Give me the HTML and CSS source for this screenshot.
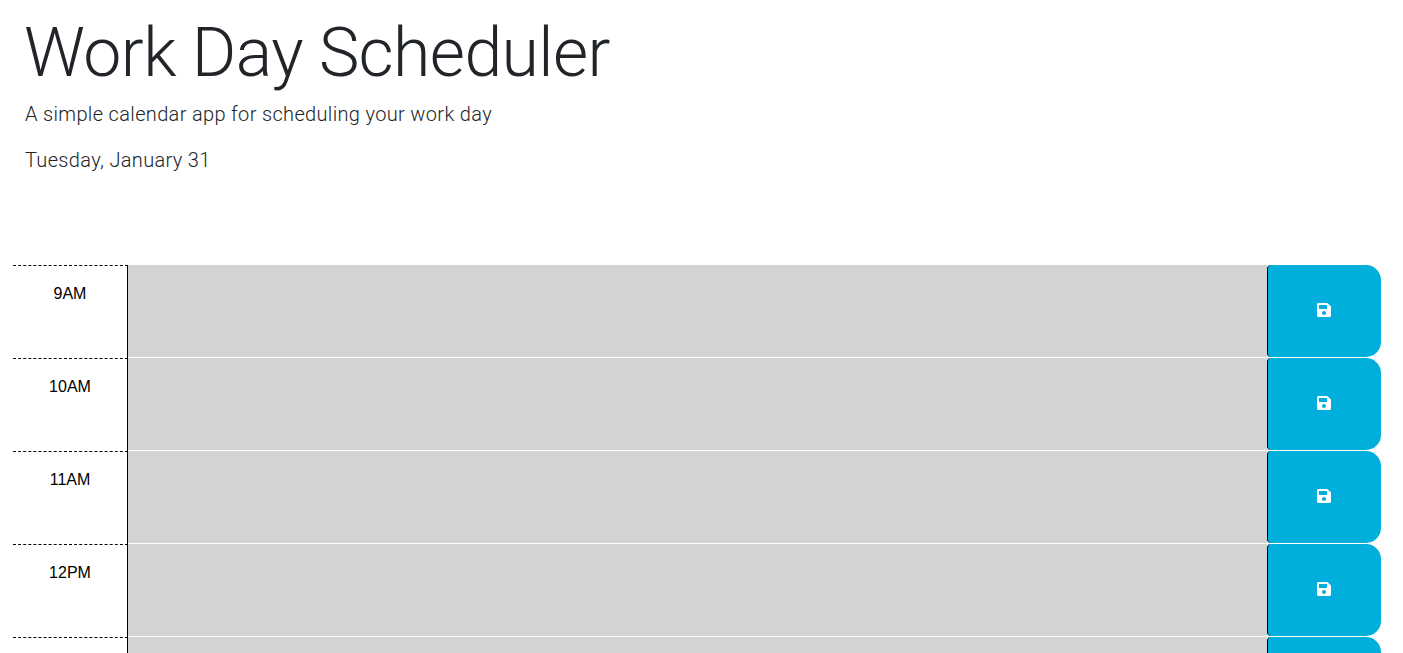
FILE: index.html
```html
<!DOCTYPE html>
<html lang="en">
<head>
  <meta charset="UTF-8">
  <title>Work Day Scheduler</title>
  <link rel="stylesheet" href="styles.css">
</head>
<body>

<header class="jumbotron">
  <h1 class="display">Work Day Scheduler</h1>
  <p class="lead">A simple calendar app for scheduling your work day</p>
  <p class="lead" id="currentDay">Tuesday, January 31</p>
</header>

<div class="container">
  <div class="row">
    <div class="hour">9AM</div>
    <textarea class="description"></textarea>
    <button class="saveBtn"><svg class="save-icon" viewBox="0 0 448 512"><path d="M433.9 129.9l-83.9-83.9A48 48 0 0 0 316.1 32H48C21.5 32 0 53.5 0 80v352c0 26.5 21.5 48 48 48h352c26.5 0 48-21.5 48-48V163.9a48 48 0 0 0-14.1-34zM224 416c-35.3 0-64-28.7-64-64 0-35.3 28.7-64 64-64s64 28.7 64 64c0 35.3-28.7 64-64 64zm96-304.5V212c0 6.6-5.4 12-12 12H76c-6.6 0-12-5.4-12-12V108c0-6.6 5.4-12 12-12h228.5c3.2 0 6.2 1.3 8.5 3.5l3.5 3.5c2.3 2.3 3.5 5.3 3.5 8.5z"/></svg></button>
  </div>
  <div class="row">
    <div class="hour">10AM</div>
    <textarea class="description"></textarea>
    <button class="saveBtn"><svg class="save-icon" viewBox="0 0 448 512"><path d="M433.9 129.9l-83.9-83.9A48 48 0 0 0 316.1 32H48C21.5 32 0 53.5 0 80v352c0 26.5 21.5 48 48 48h352c26.5 0 48-21.5 48-48V163.9a48 48 0 0 0-14.1-34zM224 416c-35.3 0-64-28.7-64-64 0-35.3 28.7-64 64-64s64 28.7 64 64c0 35.3-28.7 64-64 64zm96-304.5V212c0 6.6-5.4 12-12 12H76c-6.6 0-12-5.4-12-12V108c0-6.6 5.4-12 12-12h228.5c3.2 0 6.2 1.3 8.5 3.5l3.5 3.5c2.3 2.3 3.5 5.3 3.5 8.5z"/></svg></button>
  </div>
  <div class="row">
    <div class="hour">11AM</div>
    <textarea class="description"></textarea>
    <button class="saveBtn"><svg class="save-icon" viewBox="0 0 448 512"><path d="M433.9 129.9l-83.9-83.9A48 48 0 0 0 316.1 32H48C21.5 32 0 53.5 0 80v352c0 26.5 21.5 48 48 48h352c26.5 0 48-21.5 48-48V163.9a48 48 0 0 0-14.1-34zM224 416c-35.3 0-64-28.7-64-64 0-35.3 28.7-64 64-64s64 28.7 64 64c0 35.3-28.7 64-64 64zm96-304.5V212c0 6.6-5.4 12-12 12H76c-6.6 0-12-5.4-12-12V108c0-6.6 5.4-12 12-12h228.5c3.2 0 6.2 1.3 8.5 3.5l3.5 3.5c2.3 2.3 3.5 5.3 3.5 8.5z"/></svg></button>
  </div>
  <div class="row">
    <div class="hour">12PM</div>
    <textarea class="description"></textarea>
    <button class="saveBtn"><svg class="save-icon" viewBox="0 0 448 512"><path d="M433.9 129.9l-83.9-83.9A48 48 0 0 0 316.1 32H48C21.5 32 0 53.5 0 80v352c0 26.5 21.5 48 48 48h352c26.5 0 48-21.5 48-48V163.9a48 48 0 0 0-14.1-34zM224 416c-35.3 0-64-28.7-64-64 0-35.3 28.7-64 64-64s64 28.7 64 64c0 35.3-28.7 64-64 64zm96-304.5V212c0 6.6-5.4 12-12 12H76c-6.6 0-12-5.4-12-12V108c0-6.6 5.4-12 12-12h228.5c3.2 0 6.2 1.3 8.5 3.5l3.5 3.5c2.3 2.3 3.5 5.3 3.5 8.5z"/></svg></button>
  </div>
  <div class="row row-last">
    <div class="hour"></div>
    <textarea class="description"></textarea>
    <button class="saveBtn"></button>
  </div>
</div>

</body>
</html>
```

FILE: styles.css
```css
body {
  margin: 0;
  font-family: 'Liberation Sans', Arial, sans-serif;
  color: #212529;
  background: #fff;
  line-height: 1.5;
  overflow: hidden;
}

.jumbotron {
  padding: 17px 25px 0 24px;
  height: 249px;
  box-sizing: border-box;
}

.display {
  margin: 0 0 10px;
  font-family: Roboto, 'Liberation Sans', sans-serif;
  font-size: 68px;
  font-weight: 300;
  line-height: 72px;
  letter-spacing: -0.6px;
}

.lead {
  margin: 0 0 16px 1px;
  font-family: Roboto, 'Liberation Sans', sans-serif;
  font-size: 20px;
  font-weight: 300;
  line-height: 30px;
  letter-spacing: 0.34px;
}

.container {
  padding: 16px 22px 0 13px;
}

.row {
  display: flex;
  height: 93px;
}

.hour {
  width: 115px;
  box-sizing: border-box;
  border-top: 1px dashed #000;
  border-right: 1px solid #000;
  padding-top: 16px;
  text-align: center;
  font-size: 16px;
  color: #000;
}

.description {
  flex: 1;
  margin: 0 0 1px;
  padding: 8px;
  border: none;
  background: #d3d3d3;
  resize: none;
}

.saveBtn {
  width: 114px;
  margin: 0 0 1px;
  padding: 0 1px 0 0;
  border: none;
  border-left: 1px solid #000;
  border-radius: 4px 15px 15px 4px;
  background: #00afdb;
  cursor: pointer;
}

.save-icon {
  width: 14px;
  height: 16px;
  fill: #fff;
}
```
